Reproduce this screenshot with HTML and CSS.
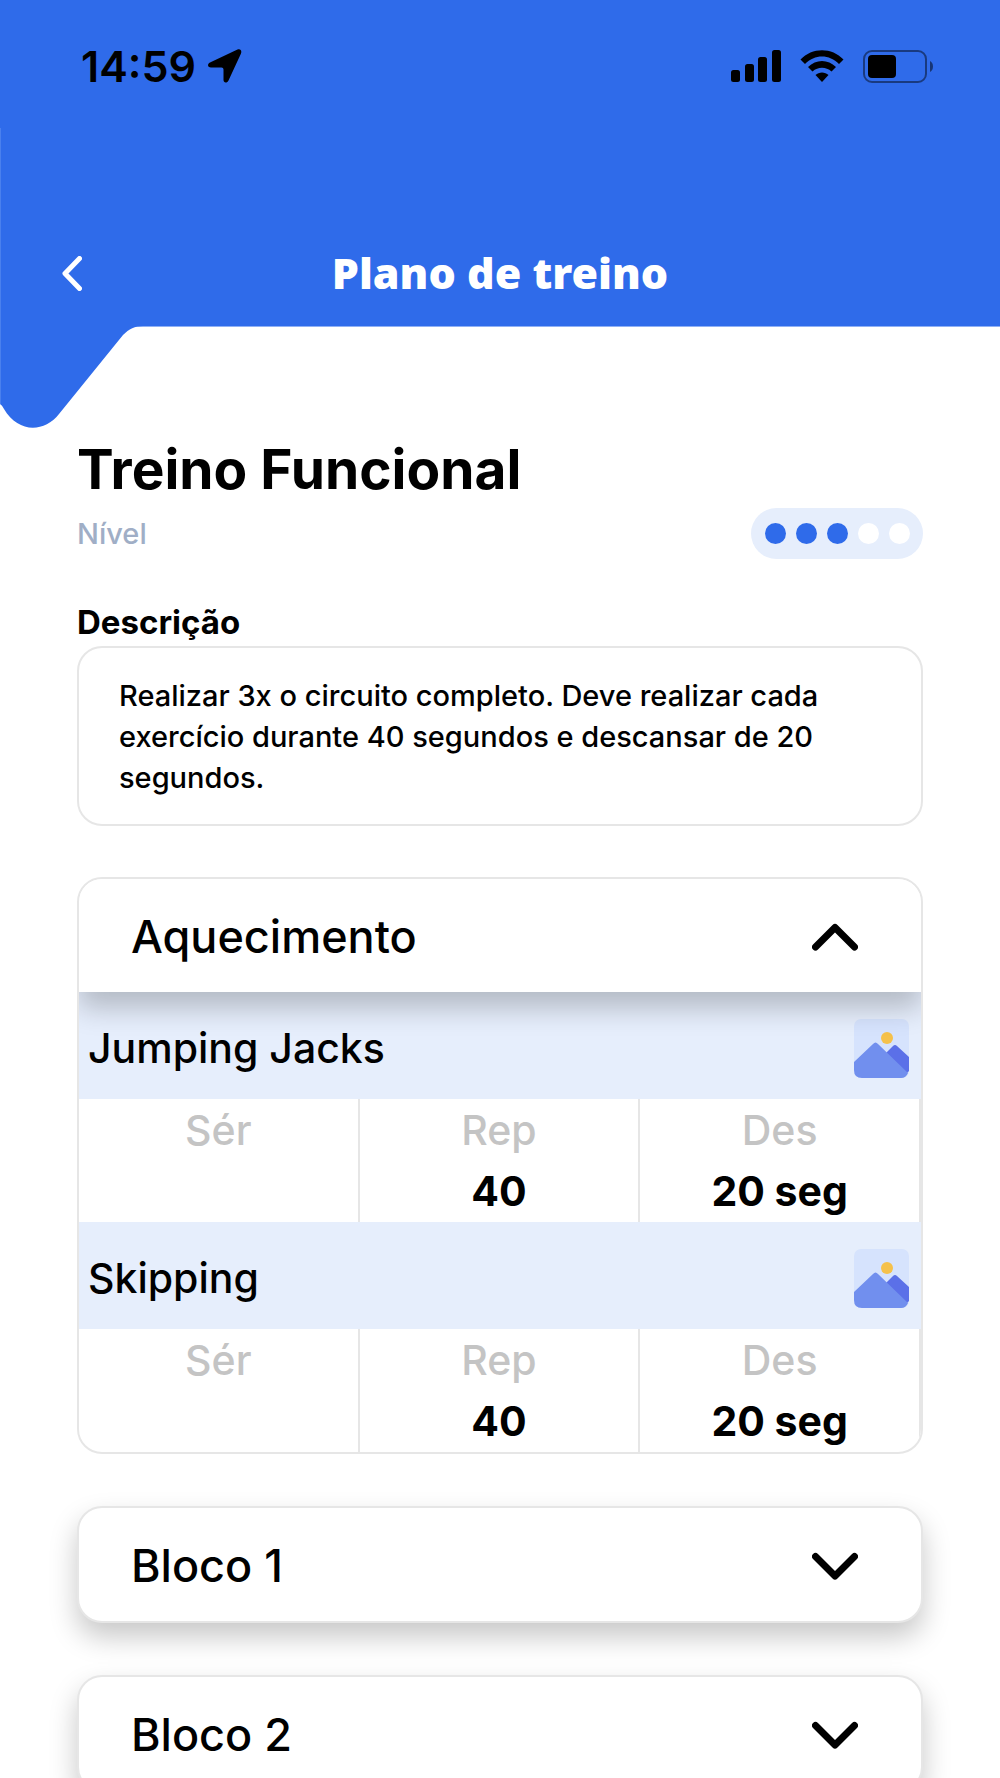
FILE: index.html
```html
<!DOCTYPE html>
<html lang="pt">
<head>
    <meta charset="UTF-8">
    <meta name="viewport" content="width=device-width, initial-scale=1.0">
    <title>Plano de treino</title>
    <link rel="stylesheet" href="styles.css">
</head>
<body>

<header class="header">
    <div class="status-bar">
        <div class="status-left">
            <span class="time">14:59</span>
            <svg class="location" width="34" height="34" viewBox="0 0 34 34" aria-hidden="true">
                <path d="M2 13.500L29.500 0.500C32.500 -0.500 34 1.500 33 4.500L20.500 31.500C19 34.500 15.500 34 15.500 31V20.500Q15.500 18.500 13.500 18.500H3C-0.500 18.500 -1 15 2 13.500Z"/>
            </svg>
        </div>
        <div class="status-right">
            <svg width="50" height="32" viewBox="0 0 50 32" aria-hidden="true">
                <rect x="0" y="20" width="9" height="12" rx="2.500"/>
                <rect x="14" y="14" width="9" height="18" rx="2.500"/>
                <rect x="27" y="7" width="9" height="25" rx="2.500"/>
                <rect x="41" y="0" width="9" height="32" rx="2.500"/>
            </svg>
            <svg width="44" height="32" viewBox="0 0 44 32" aria-hidden="true">
                <path d="M0.500 9.500C12 -3 32 -3 43.500 9.500L39 14C29.500 4 14.500 4 5 14Z"/>
                <path d="M8 17C16 9 28 9 36 17L31.500 21.500C26 16.500 18 16.500 12.500 21.500Z"/>
                <path d="M15.500 25C19 21.500 25 21.500 28.500 25L22 32Z"/>
            </svg>
            <svg width="70" height="33" viewBox="0 0 70 33" aria-hidden="true">
                <rect class="battery-frame" x="1" y="1" width="62" height="31" rx="8"/>
                <rect x="5" y="5" width="28" height="23" rx="4"/>
                <path class="battery-tip" d="M67 11C71 13 71 20 67 22Z"/>
            </svg>
        </div>
    </div>
    <nav class="nav">
        <a class="back" href="#" aria-label="Voltar">
            <svg width="20" height="35" viewBox="0 0 20 35">
                <path d="M17.500 2.500L3 17.500L17.500 32.500"/>
            </svg>
        </a>
        <h1 class="nav-title">Plano de treino</h1>
    </nav>
    <svg class="header-tail" width="143" height="103" viewBox="0 0 143 103" aria-hidden="true">
        <path d="M0 0H143C135 0 129 3 123 9L59 88C44 107 18 107 4 83Q2 79 0 78Z"/>
        <rect class="tail-edge" width="1" height="78"/>
    </svg>
</header>

<main class="content">
    <h2 class="plan-title">Treino Funcional</h2>
    <div class="level">
        <span class="level-label">Nível</span>
        <div class="level-dots" role="img" aria-label="3 de 5">
            <span class="dot filled"></span>
            <span class="dot filled"></span>
            <span class="dot filled"></span>
            <span class="dot"></span>
            <span class="dot"></span>
        </div>
    </div>

    <h3 class="section-title">Descrição</h3>
    <p class="description">Realizar 3x o circuito completo. Deve realizar cada exercício durante 40 segundos e descansar de 20 segundos.</p>

    <div class="blocks">
        <section class="block open">
            <button class="block-header" type="button" aria-expanded="true">
                <span>Aquecimento</span>
                <svg class="chevron" width="46" height="28" viewBox="0 0 46 28">
                    <path d="M3.500 24L23 4.500L42.500 24"/>
                </svg>
            </button>

            <div class="exercise">
                <h4 class="exercise-name">Jumping Jacks</h4>
                <button class="picture" type="button" aria-label="Ver imagem">
                    <svg width="55" height="59" viewBox="0 0 55 59">
                        <rect width="55" height="59" rx="7" fill="#d6e3fd"/>
                        <circle cx="33" cy="19" r="6" fill="#f5c14b"/>
                        <path d="M31 35L39 27Q41 25 43 27L55 38V52L50 57Z" fill="#5b70e8"/>
                        <path d="M0 43L19 25Q21.500 22 24 25L54 54Q52 59 47 59H8Q0 59 0 51Z" fill="#718fee"/>
                    </svg>
                </button>
            </div>
            <table class="sets">
                <thead>
                    <tr><th>Sér</th><th>Rep</th><th>Des</th></tr>
                </thead>
                <tbody>
                    <tr><td></td><td>40</td><td>20 seg</td></tr>
                </tbody>
            </table>

            <div class="exercise">
                <h4 class="exercise-name">Skipping</h4>
                <button class="picture" type="button" aria-label="Ver imagem">
                    <svg width="55" height="59" viewBox="0 0 55 59">
                        <rect width="55" height="59" rx="7" fill="#d6e3fd"/>
                        <circle cx="33" cy="19" r="6" fill="#f5c14b"/>
                        <path d="M31 35L39 27Q41 25 43 27L55 38V52L50 57Z" fill="#5b70e8"/>
                        <path d="M0 43L19 25Q21.500 22 24 25L54 54Q52 59 47 59H8Q0 59 0 51Z" fill="#718fee"/>
                    </svg>
                </button>
            </div>
            <table class="sets">
                <thead>
                    <tr><th>Sér</th><th>Rep</th><th>Des</th></tr>
                </thead>
                <tbody>
                    <tr><td></td><td>40</td><td>20 seg</td></tr>
                </tbody>
            </table>
        </section>

        <section class="block">
            <button class="block-header" type="button" aria-expanded="false">
                <span>Bloco 1</span>
                <svg class="chevron" width="46" height="28" viewBox="0 0 46 28">
                    <path d="M3.500 4.500L23 24L42.500 4.500"/>
                </svg>
            </button>
        </section>

        <section class="block">
            <button class="block-header" type="button" aria-expanded="false">
                <span>Bloco 2</span>
                <svg class="chevron" width="46" height="28" viewBox="0 0 46 28">
                    <path d="M3.500 4.500L23 24L42.500 4.500"/>
                </svg>
            </button>
        </section>
    </div>
</main>

</body>
</html>
```
FILE: styles.css
```css
* {
    box-sizing: border-box;
}

body {
    margin: 0;
    height: 100vh;
    overflow-y: auto;
    scrollbar-width: none;
    background-color: #fff;
    color: #000;
    font-family: Inter, "Liberation Sans", sans-serif;
}

h1, h2, h3, h4, p {
    margin: 0;
}

svg {
    display: block;
}

button {
    border: none;
    padding: 0;
    background: none;
    color: inherit;
    font-family: inherit;
    cursor: pointer;
}

/* Header */
.header {
    position: relative;
    background-color: #2f6bea;
}

.status-bar {
    display: flex;
    justify-content: space-between;
    height: 128px;
    padding: 42px 67px 38px 81px;
}

.status-left,
.status-right {
    display: flex;
    align-items: center;
    gap: 12px;
}

.status-right {
    gap: 19px;
}

.time {
    font-size: 43px;
    font-weight: 600;
    line-height: 48px;
}

.battery-frame {
    fill: none;
    stroke: #000;
    stroke-width: 2;
    opacity: 0.45;
}

.battery-tip {
    opacity: 0.5;
}

.nav {
    display: grid;
    grid-template-columns: 1fr auto 1fr;
    align-items: center;
    padding: 116px 62px 24px 61px;
    border-left: 1px solid #4a80ee;
    border-bottom: 1px solid #8fb0f5;
}

.back {
    justify-self: start;
}

.back path {
    fill: none;
    stroke: #fff;
    stroke-width: 5;
    stroke-linecap: round;
    stroke-linejoin: round;
}

.nav-title {
    color: #fff;
    font-family: "Noto Sans", sans-serif;
    font-size: 43px;
    font-weight: 900;
    line-height: 58px;
}

/* Hangs below the header, over the page */
.header-tail {
    position: absolute;
    left: 0;
    top: calc(100% - 1px);
    fill: #2f6bea;
}

.tail-edge {
    fill: #4a80ee;
}

/* Content */
.content {
    padding: 112px 77px 48px;
}

.plan-title {
    font-size: 55px;
    font-weight: 700;
    line-height: 60px;
}

.level {
    display: flex;
    justify-content: space-between;
    align-items: center;
    margin-top: 9px;
}

.level-label {
    color: #a0aec6;
    font-size: 29px;
    font-weight: 500;
}

.level-dots {
    display: flex;
    gap: 10px;
    padding: 15px 13px 15px 14px;
    border-radius: 26px;
    background-color: #e6eefc;
}

.dot {
    width: 21px;
    height: 21px;
    border-radius: 50%;
    background-color: #fff;
}

.dot.filled {
    background-color: #2f6bea;
}

.section-title {
    margin: 43px 0 4px;
    font-size: 33px;
    font-weight: 700;
    line-height: 40px;
}

.description {
    padding: 27px 40px 26px;
    border: 2px solid #e6e6e6;
    border-radius: 25px;
    font-size: 29px;
    font-weight: 500;
    line-height: 41px;
}

/* Accordion */
.blocks {
    display: flex;
    flex-direction: column;
    gap: 52px;
    margin-top: 51px;
}

.block {
    border: 2px solid #e6e6e6;
    border-radius: 25px;
    background-color: #fff;
    box-shadow: 0 14px 28px rgba(0, 0, 0, 0.22);
}

.block.open {
    overflow: hidden;
    box-shadow: none;
}

.block-header {
    display: flex;
    justify-content: space-between;
    align-items: center;
    width: 100%;
    height: 113px;
    padding: 2px 63px 0 52px;
    font-size: 45px;
    font-weight: 500;
}

.block.open .block-header {
    position: relative;
    background-color: #fff;
    box-shadow: 0 16px 26px rgba(0, 0, 0, 0.22);
}

.chevron {
    fill: none;
    stroke: #000;
    stroke-width: 7;
    stroke-linecap: round;
    stroke-linejoin: round;
}

.exercise {
    display: flex;
    justify-content: space-between;
    padding: 27px 12px 21px 9px;
    background-color: #e6eefc;
}

.exercise-name {
    font-size: 41px;
    font-weight: 500;
    line-height: 58px;
}

.sets {
    width: 100%;
    table-layout: fixed;
    border-collapse: separate;
    border-spacing: 0;
    text-align: center;
    font-size: 41px;
}

.sets th,
.sets td {
    padding: 0;
    border-right: 2px solid #e6e6e6;
}

.sets th {
    height: 62px;
    color: #c4c4c4;
    font-weight: 500;
    line-height: 62px;
}

.sets td {
    height: 61px;
    font-weight: 700;
    line-height: 61px;
}
```
